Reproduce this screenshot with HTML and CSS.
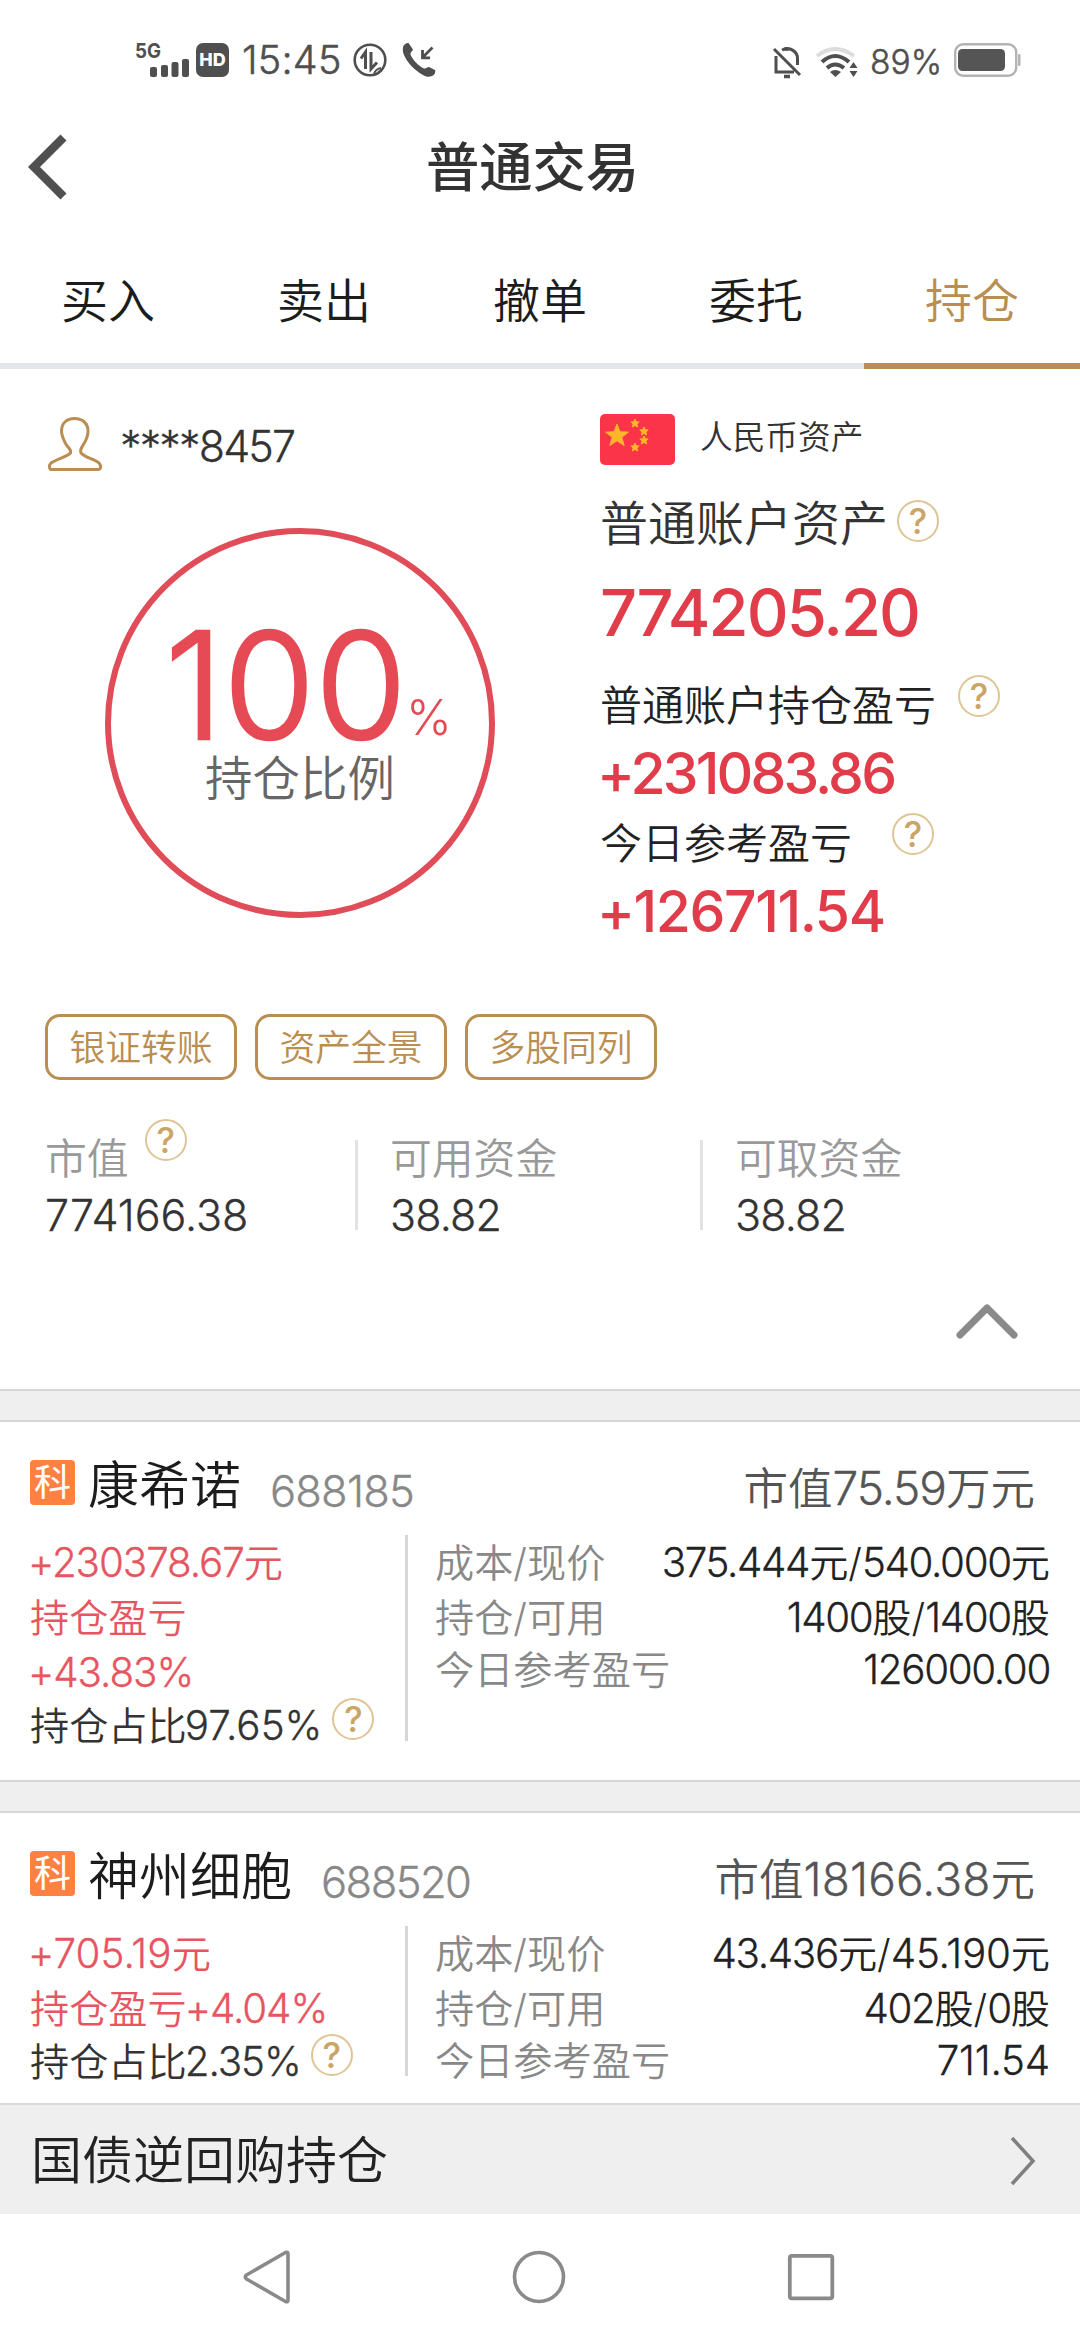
FILE: index.html
```html
<!DOCTYPE html>
<html lang="zh-CN">
<head>
<meta charset="utf-8">
<title>普通交易</title>
<link rel="stylesheet" href="styles.css">
</head>
<body>
<div class="status">
  <svg class="signal" width="54" height="36" viewBox="0 0 54 36">
    <text class="net" x="-1" y="15.5" textLength="26" lengthAdjust="spacingAndGlyphs">5G</text>
    <g fill="#4f4f4f"><rect x="14" y="25" width="7" height="10" rx="2"/><rect x="25" y="23" width="7" height="12" rx="2"/><rect x="35.500" y="20" width="7" height="15" rx="2"/><rect x="46" y="17" width="7" height="18" rx="2"/></g>
  </svg>
  <div class="hd">HD</div>
  <div class="clock">15:45</div>
  <svg class="data" width="34" height="34" viewBox="0 0 34 34" fill="none" stroke="#4f4f4f">
    <circle cx="17" cy="17" r="15.300" stroke-width="2.600"/>
    <path d="M12.500 26V9L8 15.500" stroke-width="3"/>
    <path d="M18 9V26l6-6.500" stroke-width="3"/>
    <path d="M21 31c1-4 3-5 7-6M24 31c1-2 3-3 5-4" stroke-width="2"/>
  </svg>
  <svg class="call" width="34" height="34" viewBox="0 0 34 34">
    <path d="M1 5C1 2 4 0 6.500 0L11 6.500C11 8 8 9 8.500 11.500 10 16 17 23.500 22 25.500c2 .5 3-1.500 5-1.500l6 3c1 2-.5 5-3 6-3 1.300-6 1-9-1C13 27.500 5 19.500 2 12 1 9.500.500 7 1 5z" fill="#4f4f4f"/>
    <path d="M30.500 4.500l-10 10M20.500 7v7.800H28" fill="none" stroke="#4f4f4f" stroke-width="2.800"/>
  </svg>
  <svg class="bell" width="30" height="34" viewBox="0 0 30 34" fill="none" stroke="#4f4f4f" stroke-width="3">
    <path d="M4 11V27H22M10 5c8-4 16 2 15.500 9v6M2 4l26 26"/><path d="M12 5a3 3 0 0 1 5 0M12 31.500h6" stroke-width="3.500"/>
  </svg>
  <svg class="wifi" width="42" height="34" viewBox="0 0 42 34" fill="none" stroke="#4f4f4f" stroke-width="4">
    <path d="M1 11Q19-3 38 11" stroke="#dcdcdc"/><path d="M6 17Q19 5 33 17M11 23Q19 16 28 23"/>
    <path d="M14 27Q19 23 25 27l-5.500 5zM37.500 17l4 6h-8zM37.500 32l4-6h-8z" fill="#4f4f4f" stroke="none"/>
  </svg>
  <div class="pct">89%</div>
  <svg class="battery" width="67" height="34" viewBox="0 0 67 34">
    <rect x="1.200" y="1.200" width="61" height="31.600" rx="8" fill="none" stroke="#b3b3b3" stroke-width="2.400"/>
    <rect x="4" y="6" width="47" height="22" rx="4.500" fill="#555"/><rect x="64" y="11" width="2.500" height="12" rx="1" fill="#b3b3b3"/>
  </svg>
</div>

<header class="header">
  <svg class="back" width="40" height="68" viewBox="0 0 40 68"><path d="M35.500 4.500 6 34l29.500 29.500" fill="none" stroke="#505050" stroke-width="8.500"/></svg>
  <h1>普通交易</h1>
</header>

<nav class="tabs"><a>买入</a><a>卖出</a><a>撤单</a><a>委托</a><a class="on">持仓</a></nav>

<section class="summary">
  <div class="overview">
    <div class="left">
      <div class="user">
        <svg width="54" height="54" viewBox="0 0 54 54"><path d="M22.500 36c1.500-3-2.500-5-5-9.500-2-4-4-8-4-12.500C13.500 6 19 1.500 26.500 1.500S40 6 40 14c0 4.500-1.500 8.500-4 12.500-2.500 4.500-4.500 6-3 9.500 3 4 14 6.500 18 10 2.500 3 2 6.500-1 6.500H4c-3 0-3.500-4-1-6.500 4-3.500 16-6 19.500-10z" fill="none" stroke="#b98e50" stroke-width="3"/></svg>
        <span>****8457</span>
      </div>
      <div class="ring">
        <div class="ratio"><span class="big">100</span><span class="unit">%</span></div>
        <div class="ratio-label">持仓比例</div>
      </div>
    </div>
    <div class="right">
      <div class="currency">
        <svg width="75" height="51" viewBox="0 0 75 51"><rect width="75" height="51" rx="5" fill="#fb3449"/>
          <g fill="#fdb52b" stroke="#fdb52b"><path d="M17 10l3 7.800 8.500.3-6.700 5.200 2.400 8.200L17 26.800l-7.200 4.700 2.400-8.200-6.700-5.200 8.500-.3z"/>
          <path d="M35 5l1.200 2.700 3 .3-2.300 2 .7 3-2.600-1.600-2.600 1.600.7-3-2.300-2 3-.3zM44 13l1.200 2.700 3 .3-2.300 2 .7 3-2.600-1.600-2.600 1.600.7-3-2.300-2 3-.3zM44 22l1.200 2.700 3 .3-2.300 2 .7 3-2.600-1.600-2.600 1.600.7-3-2.300-2 3-.3zM35 29l1.200 2.700 3 .3-2.300 2 .7 3-2.600-1.600-2.600 1.600.7-3-2.300-2 3-.3z"/></g></svg>
        <span>人民币资产</span>
      </div>
      <div class="label total"><span>普通账户资产</span><i class="help">?</i></div>
      <div class="amount total-amount">774205.20</div>
      <div class="label profit"><span>普通账户持仓盈亏</span><i class="help">?</i></div>
      <div class="amount signed profit-amount">+231083.86</div>
      <div class="label today"><span>今日参考盈亏</span><i class="help">?</i></div>
      <div class="amount signed today-amount">+126711.54</div>
    </div>
  </div>
  <div class="actions"><button>银证转账</button><button>资产全景</button><button>多股同列</button></div>
  <div class="stats">
    <div><p class="k"><span>市值</span><i class="help">?</i></p><p class="v loose">774166.38</p></div>
    <div><p class="k">可用资金</p><p class="v">38.82</p></div>
    <div><p class="k">可取资金</p><p class="v">38.82</p></div>
  </div>
  <svg class="collapse" width="62" height="36" viewBox="0 0 62 36"><path d="M4 31 31 4l27 27" fill="none" stroke="#8a8a8a" stroke-width="7" stroke-linecap="round" stroke-linejoin="round"/></svg>
</section>

<div class="gap"></div>

<article class="card first">
  <div class="title"><b class="badge">科</b><h2>康希诺</h2><span class="code">688185</span><span class="mv">市值<span class="n">75.59</span>万元</span></div>
  <div class="body">
    <div class="pl">
      <p class="red"><span class="n">+230378.67</span>元</p>
      <p class="red">持仓盈亏</p>
      <p class="red"><span class="n">+43.83%</span></p>
      <p>持仓占比<span class="n w">97.65%</span><i class="help">?</i></p>
    </div>
    <div class="detail">
      <p><span>成本/现价</span><em><span class="n">375.444</span>元/<span class="n">540.000</span>元</em></p>
      <p><span>持仓/可用</span><em><span class="n">1400</span>股/<span class="n">1400</span>股</em></p>
      <p><span>今日参考盈亏</span><em><span class="n">126000.00</span></em></p>
    </div>
  </div>
</article>

<div class="gap"></div>

<article class="card second">
  <div class="title"><b class="badge">科</b><h2>神州细胞</h2><span class="code tight">688520</span><span class="mv">市值<span class="n w">18166.38</span>元</span></div>
  <div class="body">
    <div class="pl">
      <p class="red"><span class="n w">+705.19</span>元</p>
      <p class="red">持仓盈亏<span class="n">+4.04%</span></p>
      <p>持仓占比<span class="n">2.35%</span><i class="help">?</i></p>
    </div>
    <div class="detail">
      <p><span>成本/现价</span><em><span class="n">43.436</span>元/<span class="n w">45.190</span>元</em></p>
      <p><span>持仓/可用</span><em><span class="n">402</span>股/<span class="n">0</span>股</em></p>
      <p><span>今日参考盈亏</span><em><span class="n w">711.54</span></em></p>
    </div>
  </div>
</article>

<div class="repo"><span>国债逆回购持仓</span>
  <svg width="28" height="50" viewBox="0 0 28 50"><path d="M3 2l21 23L3 48" fill="none" stroke="#808080" stroke-width="3.600"/></svg>
</div>

<div class="sysnav">
  <svg width="48" height="54" viewBox="0 0 48 54"><path d="M42.500 2.500Q45 1.500 45 4v46q0 2.500-2.500 1.500L3.500 29Q1 27 3.500 25z" fill="none" stroke="#8a8a8a" stroke-width="3.600" stroke-linejoin="round"/></svg>
  <svg width="54" height="54" viewBox="0 0 54 54"><circle cx="27" cy="27" r="24.500" fill="none" stroke="#8a8a8a" stroke-width="3.600"/></svg>
  <svg width="48" height="54" viewBox="0 0 48 54"><rect x="2.800" y="5.800" width="42.500" height="42.500" rx="2" fill="none" stroke="#8a8a8a" stroke-width="3.800"/></svg>
</div>
</body>
</html>
```
FILE: styles.css
```css
* { box-sizing: border-box; margin: 0; padding: 0; }
body {
  width: 1080px; height: 2340px; overflow: hidden; background: #fff; color: #222;
  font-family: Inter, "Noto Sans CJK SC", sans-serif; font-weight: 350;
}
svg { display: block; flex: none; overflow: visible; }
span, p, h1, h2, a, em { white-space: nowrap; }
em, i { font-style: normal; }

/* status bar */
.status { height: 100px; padding: 42px 59px 0 136px; display: flex; align-items: flex-start; color: #4f4f4f; }
.net { font: 700 20px Inter, sans-serif; fill: #4f4f4f; }
.hd { margin: 1px 0 0 6px; width: 33px; height: 34px; border-radius: 7px; background: #4f4f4f; color: #fff; font-size: 18px; font-weight: 800; line-height: 34px; text-align: center; }
.clock { margin: -1px 0 0 13px; width: 111px; font-size: 39.5px; line-height: 39px; font-weight: 300; letter-spacing: .006em; -webkit-text-stroke: .5px #4f4f4f; }
.data { margin-top: 1px; }
.call { margin: 1px 0 0 15px; }
.bell { margin: 3px 0 0 auto; }
.wifi { margin: 3px 0 0 14px; }
.pct { margin: 0 0 0 12px; width: 84px; font-size: 33.5px; line-height: 40px; font-weight: 300; -webkit-text-stroke: .5px #4f4f4f; }
.battery { margin-top: 1px; }

/* title bar */
.header { height: 134px; display: grid; grid-template-columns: 200px 1fr 216px; align-items: center; }
.back { margin-left: 28px; }
h1 { padding: 2px 0 0 1px; text-align: center; font-size: 53.300px; line-height: 60px; font-weight: 500; color: #333; }

.tabs { height: 135px; display: grid; grid-template-columns: repeat(5, 1fr); text-align: center; }
.tabs a { font-size: 47px; line-height: 134px; height: 135px; border-bottom: 6px solid #e5e6eb; color: #1c1c1c; }
.tabs .on { color: #b98e50; border-color: #b98e50; }

/* account summary */
.summary { height: 1020px; padding: 45px 0 0 45px; }
.overview { display: grid; grid-template-columns: 555px 1fr; height: 527px; }
.left { padding-top: 3px; }
.user { display: flex; margin-left: 3px; height: 54px; }
.user span { margin-left: 18px; font-size: 43px; line-height: 58px; letter-spacing: -.0429em; color: #333; font-weight: 300; -webkit-text-stroke: .3px #333; }
.ring { margin: 57px 0 0 60px; width: 390px; height: 390px; border: 6px solid #e04c58; border-radius: 50%; padding-top: 92px; }
.ratio { display: flex; align-items: flex-start; height: 120px; padding-left: 54px; color: #e64a55; font-weight: 300; }
.big { font-size: 148px; line-height: 120px; letter-spacing: .002em; -webkit-text-stroke: 2.500px #e64a55; }
.unit { font-size: 49px; line-height: 48px; margin: 68px 0 0 -1px; }
.ratio-label { margin-top: 9px; font-size: 47.500px; line-height: 48px; text-align: center; color: #666; }
.currency { display: flex; height: 51px; color: #333; font-size: 32.700px; line-height: 47px; }
.currency span { margin-left: 25px; }
.label { display: flex; align-items: center; }
.total { margin-top: 29px; height: 58px; font-size: 48px; line-height: 58px; color: #333; }
.total .help { margin: -5px 0 0 9px; }
.profit, .today { height: 48px; font-size: 42px; line-height: 48px; }
.profit { margin-top: 38.500px; }
.profit .help { margin: -18px 0 0 22px; }
.today { margin-top: 16px; }
.today .help { margin: -18px 0 0 40px; }
.label span { padding-top: 2px; }
.amount { height: 60px; line-height: 61px; font-size: 57px; font-weight: 500; color: #e13c49; }
.total-amount { margin-top: 30px; font-size: 65px; letter-spacing: -.030em; }
.signed { margin-left: -3px; }
.profit-amount { margin-top: 14.500px; letter-spacing: -.050em; }
.today-amount { margin-top: 13.500px; letter-spacing: -.025em; }
.help {
  flex: none; display: inline-block; width: 42px; height: 42px; border: 2px solid #dfc596; border-radius: 50%;
  font-size: 35px; line-height: 38px; font-weight: 500; text-align: center; letter-spacing: 0; color: #cba566;
}

.actions { display: flex; gap: 18px; margin-top: 73px; }
.actions button {
  width: 192px; height: 66px; border: 3px solid #b98e50; border-radius: 15px; background: none;
  font-family: inherit; font-size: 35.800px; font-weight: 350; line-height: 62px; color: #b98e50; white-space: nowrap;
}
.stats { display: grid; grid-template-columns: 310px 345px 1fr; margin-top: 60px; height: 90px; }
.stats > div + div { border-left: 3px solid #e2e2e2; padding-left: 32px; }
.k { display: flex; height: 37px; line-height: 39px; font-size: 41.800px; color: #999; }
.k .help { margin: -21px 0 0 16px; }
.v { margin-top: 23px; line-height: 30px; font-size: 43px; font-weight: 300; letter-spacing: -.02em; color: #333; -webkit-text-stroke: .3px #333; }
.loose { letter-spacing: 0; }
.collapse { margin: 74px 0 0 911px; }

.gap { height: 33px; background: #efefef; border: solid #d6d6d6; border-width: 2px 0; }

/* holdings */
.card { padding: 38px 30px 0 30px; }
.first { height: 358px; }
.second { height: 290px; }
.title { display: flex; height: 50px; line-height: 51px; }
.badge { width: 45px; height: 45px; border-radius: 4px; background: #ff8142; color: #fff; font-size: 37px; line-height: 45px; font-weight: 400; text-align: center; }
h2 { margin-left: 13px; font-size: 51px; font-weight: 350; color: #1c1c1c; }
.code { margin: 6px 0 0 29px; font-size: 43.500px; font-weight: 300; letter-spacing: -.019em; color: #888; -webkit-text-stroke: .3px #888; }
.tight { letter-spacing: -.036em; }
.mv { margin: 3px 15px 0 auto; font-size: 44.500px; color: #555; }
.mv .n { font-size: 46px; }
.body { display: grid; grid-template-columns: 375px 1fr; margin-top: 25px; font-size: 39.200px; line-height: 55px; }
.first .body { height: 206px; grid-template-rows: 206px; }
.second .body { height: 150px; grid-template-rows: 150px; }
.body p { display: flex; height: 55px; }
.n { font-size: 40.300px; font-weight: 300; letter-spacing: -.022em; -webkit-text-stroke: .3px currentColor; }
.w { letter-spacing: .003em; }
.red { color: #e65560; }
.pl { color: #333; }
.pl .n:first-child { margin-left: -2px; letter-spacing: -.026em; }
.pl .w:first-child { letter-spacing: .002em; }
.pl p:last-child { margin-top: -2px; }
.pl .help { margin: 0 0 0 10px; }
.detail { border-left: 3px solid #d6d6d6; padding: 0 0 0 27px; color: #888; }
.detail p { justify-content: space-between; }
.detail p:last-child { margin-top: -3px; }
.detail em { display: flex; color: #222; }
.detail .n { letter-spacing: -.033em; }
.detail .w { letter-spacing: -.004em; }

.repo { display: flex; align-items: center; justify-content: space-between; height: 111px; padding: 2px 43px 0 31px; border-top: 2px solid #dadada; background: #efefef; font-size: 51px; line-height: 60px; }
.sysnav { display: flex; height: 126px; padding: 36px 245px 0 243px; justify-content: space-between; }
```
